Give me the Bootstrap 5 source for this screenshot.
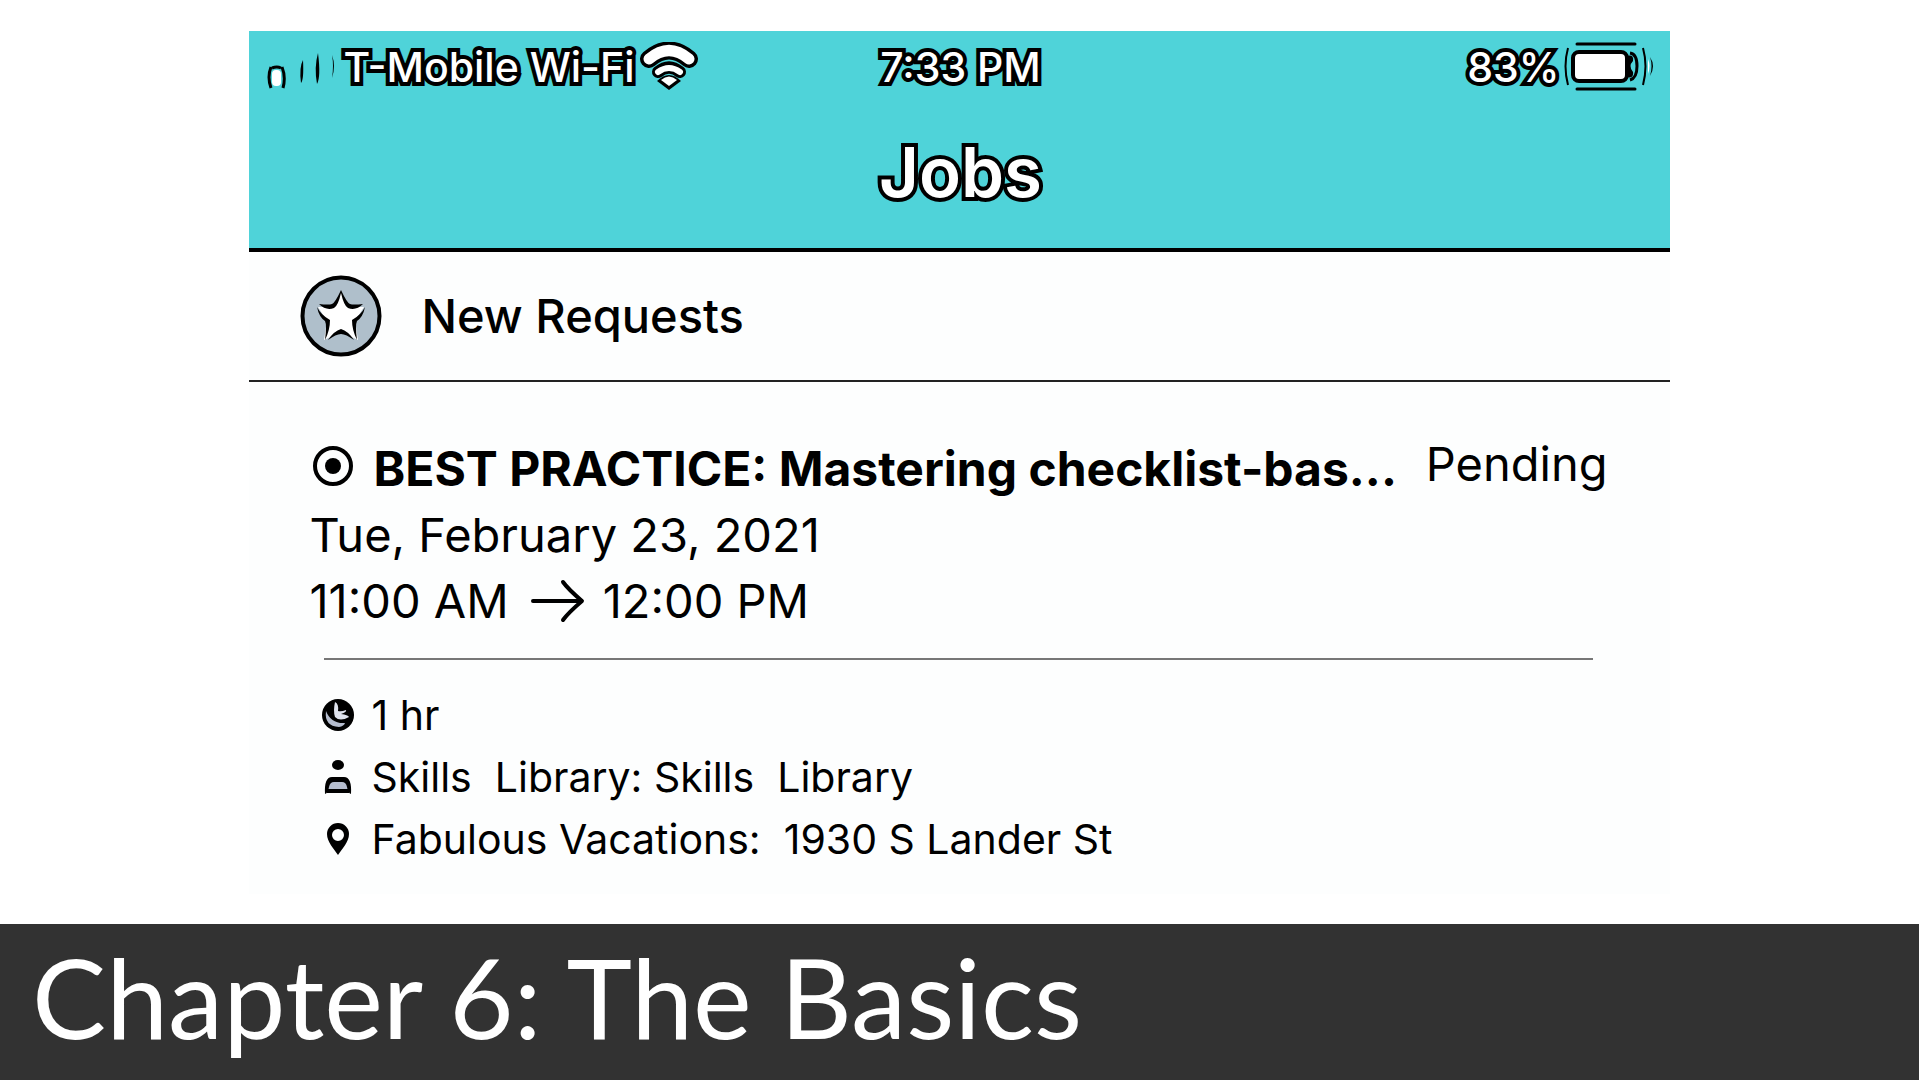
<!DOCTYPE html>
<html lang="en">
<head>
<meta charset="utf-8">
<meta name="viewport" content="width=device-width, initial-scale=1">
<title>Chapter 6: The Basics</title>
<link href="https://cdn.jsdelivr.net/npm/bootstrap@5.3.0/dist/css/bootstrap.min.css" rel="stylesheet">
<style>
  body { font-family: Inter, "Liberation Sans", sans-serif; color: #000; background: #fff; }
  svg { display: block; flex: none; }
  .slide { padding-top: 31px; }
  .phone { width: 74%; background: #fdfefe; }
  .phone-head { background: #4fd3d9; border-bottom: 4px solid #000; padding: 11px 16px 34px 18px; color: #fff; }
  .outlined { -webkit-text-stroke: 8px #000; paint-order: stroke fill; }
  .status-bar { font-size: 41px; line-height: 50px; font-weight: 500; display: grid; grid-template-columns: 1fr auto 1fr; }
  .app-title { font-size: 69px; line-height: 84px; font-weight: 600; margin: 38px 0 0; }
  .group-head { height: 130px; padding: 0 50px; gap: 38px; border-bottom: 2px solid #222; }
  .group-head h2 { font-size: 47px; line-height: 66px; font-weight: 500; margin: 0; }
  .job { padding: 54px 62px 24px 60px; font-size: 47px; line-height: 66px; }
  .job-title { font-size: 48px; line-height: 66px; font-weight: 700; margin: 0; }
  .job-state { line-height: 56px; }
  .job hr { margin: 24px 15px; border-top: 2px solid #777; opacity: 1; }
  .job-meta { font-size: 41px; line-height: 62px; padding-left: 12px; margin: 0; }
  .job-meta li { display: flex; align-items: center; gap: 16px; white-space: pre-wrap; }
  .chapter { background: #323232; color: #fff; padding: 2px 32px 14px; }
  .chapter h1 { font-family: Lato, "Open Sans", sans-serif; font-size: 111px; line-height: 140px; font-weight: 400; margin: 0; }
</style>
</head>
<body>
<div class="d-flex flex-column min-vh-100">
  <main class="slide flex-grow-1">
    <section class="phone mx-auto">
      <header class="phone-head">
        <div class="status-bar align-items-center">
          <div class="d-flex align-items-center">
            <svg width="76" height="50" viewBox="0 0 76 50" aria-hidden="true">
              <rect x="5" y="28" width="9" height="16" rx="4" fill="#fff"/>
              <path d="M4 25Q0 35 4 46M15 25Q19 35 16 46M5 26Q10 24 14 26" fill="none" stroke="#000" stroke-width="3"/>
              <path d="M36 18Q32 25 34 41Q37 38 36 18ZM51 11Q47 25 50 42Q54 35 51 11ZM65 13Q69 24 65 36Q67 24 65 13Z" fill="#000"/>
            </svg>
            <span class="outlined">T-Mobile Wi-Fi</span>
            <svg class="ms-1" width="60" height="50" viewBox="0 0 60 50" aria-hidden="true">
              <g fill="none" stroke-linecap="round">
                <path d="M10 17Q30 0 50 17" stroke="#000" stroke-width="18"/>
                <path d="M10 17Q30 0 50 17" stroke="#fff" stroke-width="11"/>
                <path d="M19 30Q30 21 41 30" stroke="#000" stroke-width="12"/>
                <path d="M19 30Q30 22 41 30" stroke="#fff" stroke-width="6"/>
              </g>
              <path d="M18 39Q30 27 42 39L30 48Z" fill="#000"/>
              <path d="M22 38Q30 31 38 38L30 44Z" fill="#fff"/>
            </svg>
          </div>
          <div class="outlined">7:33 PM</div>
          <div class="d-flex align-items-center justify-content-end">
            <span class="outlined me-1">83%</span>
            <svg width="90" height="50" viewBox="0 0 90 50" aria-hidden="true">
              <g fill="none" stroke="#000">
                <path d="M13 2H71M13 47H71" stroke-width="3" stroke-linecap="round"/>
                <path d="M4 6Q-1 24 4 43M79 6Q84 24 79 43" stroke-width="2"/>
                <rect x="9" y="10" width="54" height="29" rx="6" fill="#fff" stroke-width="4"/>
                <path d="M66 11Q73 12 73 24T66 38" stroke-width="3"/>
              </g>
              <path d="M63 14Q70 12 69 19Q64 24 69 30Q70 37 63 35Z" fill="#000"/>
              <path d="M84 17Q87 24 84 32Z" fill="#fff"/>
              <path d="M86 15Q92 24 86 34Q89 24 86 15Z" fill="#000"/>
            </svg>
          </div>
        </div>
        <div class="app-title text-center outlined">Jobs</div>
      </header>

      <div class="group-head d-flex align-items-center">
        <svg width="84" height="84" viewBox="0 0 84 84" aria-hidden="true">
          <circle cx="42" cy="42" r="38.500" fill="#afbfcb" stroke="#000" stroke-width="4"/>
          <path d="M42 18L49 33L65 33L56 47L59 66L42 58L25 66L28 47L19 33L35 33Z" fill="#fff"/>
          <path d="M42 16Q36 29 33 30T20 30Q27 37 35 34Q39 32 42 19Q45 32 49 34Q57 37 64 30Q54 31 51 30T42 16ZM18 33Q20 43 26 47Q28 51 26 66Q31 56 31 46Q22 41 18 33ZM66 33Q64 43 58 47Q56 51 58 66Q53 56 53 46Q62 41 66 33ZM29 66Q35 57 42 55Q49 57 55 66Q47 60 42 60T29 66Z" fill="#000"/>
        </svg>
        <h2>New Requests</h2>
      </div>

      <article class="job">
        <div class="d-flex align-items-start justify-content-between">
          <div class="d-flex">
            <svg width="64" height="60" viewBox="0 0 64 60" aria-hidden="true">
              <circle cx="24" cy="30" r="18" fill="none" stroke="#000" stroke-width="4"/>
              <circle cx="24" cy="30" r="8" fill="#000"/>
            </svg>
            <h3 class="job-title">BEST PRACTICE: Mastering checklist-bas...</h3>
          </div>
          <span class="job-state">Pending</span>
        </div>
        <div>Tue, February 23, 2021</div>
        <div class="d-flex align-items-center">
          <span>11:00 AM</span>
          <svg class="mx-3" width="62" height="50" viewBox="0 0 62 50" role="img" aria-label="to">
            <path d="M8 25H55M38 6Q43 13 57 25Q43 37 38 44" fill="none" stroke="#000" stroke-width="4" stroke-linecap="round" stroke-linejoin="round"/>
          </svg>
          <span>12:00 PM</span>
        </div>
        <hr>
        <ul class="job-meta list-unstyled">
          <li><svg width="34" height="34" viewBox="0 0 34 34" aria-hidden="true"><circle cx="17" cy="17" r="16" fill="#000"/><path d="M5 13Q3 28 18 29Q23 28 24 25Q10 26 5 13Z" fill="#b5bdce"/><path d="M14 4Q12 13 14 19Q19 24 28 19Q27 17 20 16Q26 14 25 12Q20 14 17 13Q18 6 14 4Z" fill="#dfe3ee"/></svg><span>1 hr</span></li>
          <li><svg width="34" height="36" viewBox="0 0 34 36" aria-hidden="true"><ellipse cx="17" cy="6" rx="6" ry="5" fill="#000"/><path d="M5 33Q4 19 10 19H24Q30 19 29 33Z" fill="#b5bdce"/><path d="M4 35Q3 18 11 18H23Q31 18 30 35Q27 34 26 28Q25 23 21 23H13Q9 23 8 28Q7 34 4 35ZM6 30H28V34H6Z" fill="#000"/></svg><span>Skills  Library: Skills  Library</span></li>
          <li><svg width="34" height="34" viewBox="0 0 34 34" aria-hidden="true"><path d="M17 1A11 11 0 0 0 6 12C6 20 13 27 17 33C21 27 28 20 28 12A11 11 0 0 0 17 1ZM17 7A6 6 0 1 1 17 19A6 6 0 1 1 17 7Z" fill="#000" fill-rule="evenodd"/></svg><span>Fabulous Vacations:  1930 S Lander St</span></li>
        </ul>
      </article>
    </section>
  </main>
  <footer class="chapter"><h1>Chapter 6: The Basics</h1></footer>
</div>
<script src="https://cdn.jsdelivr.net/npm/bootstrap@5.3.0/dist/js/bootstrap.bundle.min.js"></script>
</body>
</html>
